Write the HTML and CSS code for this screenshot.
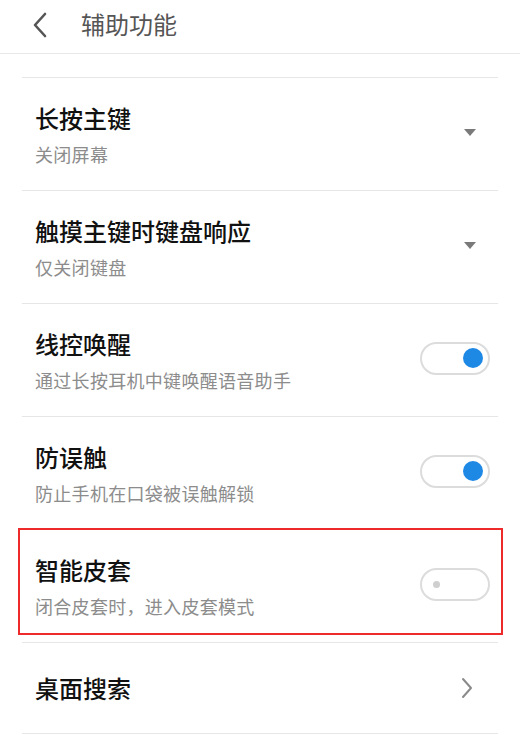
FILE: index.html
```html
<!DOCTYPE html>
<html lang="zh-CN">
<head>
<meta charset="utf-8">
<link rel="stylesheet" href="styles.css">
</head>
<body>
<header class="topbar">
  <svg class="back" width="18" height="26" viewBox="0 0 18 26"><path d="M14 2 L4 13 L14 24" fill="none" stroke="#555" stroke-width="2.6" stroke-linecap="round" stroke-linejoin="round"/></svg>
  <div class="page-title">辅助功能</div>
</header>
<div class="list">
  <div class="row">
    <div class="texts"><div class="title">长按主键</div><div class="sub">关闭屏幕</div></div>
    <span class="caret"></span>
  </div>
  <div class="row">
    <div class="texts"><div class="title">触摸主键时键盘响应</div><div class="sub">仅关闭键盘</div></div>
    <span class="caret"></span>
  </div>
  <div class="row">
    <div class="texts"><div class="title">线控唤醒</div><div class="sub">通过长按耳机中键唤醒语音助手</div></div>
    <span class="toggle on"><span class="knob"></span></span>
  </div>
  <div class="row">
    <div class="texts"><div class="title">防误触</div><div class="sub">防止手机在口袋被误触解锁</div></div>
    <span class="toggle on"><span class="knob"></span></span>
  </div>
  <div class="row marked">
    <div class="texts"><div class="title">智能皮套</div><div class="sub">闭合皮套时，进入皮套模式</div></div>
    <span class="toggle off"><span class="knob"></span></span>
  </div>
  <div class="row short">
    <div class="texts"><div class="title">桌面搜索</div></div>
    <svg class="chev" width="12" height="22" viewBox="0 0 12 22"><path d="M2 2 L10 11 L2 20" fill="none" stroke="#8a8a8a" stroke-width="2" stroke-linecap="round" stroke-linejoin="round"/></svg>
  </div>
</div>
</body>
</html>
```
FILE: styles.css
```css
html, body {
  margin: 0;
  padding: 0;
  background: #fff;
  font-family: "Noto Sans CJK SC", "Noto Sans", sans-serif;
}
.topbar {
  height: 53px;
  border-bottom: 1px solid #e8e8e8;
  display: flex;
  align-items: center;
  padding-left: 31px;
}
.back {
  display: block;
  margin-top: -4px;
}
.page-title {
  margin-left: 32px;
  font-size: 24px;
  line-height: 28px;
  color: #555;
  margin-top: -6px;
}
.list {
  margin: 23px 22px 0 22px;
}
.row {
  position: relative;
  border-top: 1px solid #e6e6e6;
  display: flex;
  align-items: center;
  padding: 26px 8px 24px 13px;
}
.row.short {
  height: 92px;
  padding: 0 8px 0 13px;
  box-sizing: border-box;
  border-bottom: 1px solid #e6e6e6;
}
.texts {
  flex: 1;
}
.title {
  font-size: 24px;
  line-height: 28px;
  color: #111;
  font-weight: 500;
}
.sub {
  margin-top: 10px;
  font-size: 18px;
  letter-spacing: 0.3px;
  line-height: 24px;
  color: #8c8c8c;
}
.caret {
  width: 0;
  height: 0;
  border-left: 6.5px solid transparent;
  border-right: 6.5px solid transparent;
  border-top: 7px solid #7a7a7a;
  margin-right: 14px;
  margin-top: -6px;
}
.chev {
  margin-right: 17px;
}
.toggle {
  position: relative;
  width: 66px;
  height: 29px;
  border: 2px solid #dcdcdc;
  border-radius: 17px;
  margin-top: -6px;
}
.toggle .knob {
  position: absolute;
  border-radius: 50%;
}
.toggle.on .knob {
  width: 20px;
  height: 20px;
  background: #1e88e5;
  right: 5px;
  top: 4.5px;
}
.toggle.off .knob {
  width: 7px;
  height: 7px;
  background: #cfcfcf;
  left: 11px;
  top: 11px;
}
.marked::after {
  content: "";
  position: absolute;
  left: -4px;
  right: -5px;
  top: -2px;
  height: 103px;
  border: 2px solid #ee2a2a;
  pointer-events: none;
}
```
